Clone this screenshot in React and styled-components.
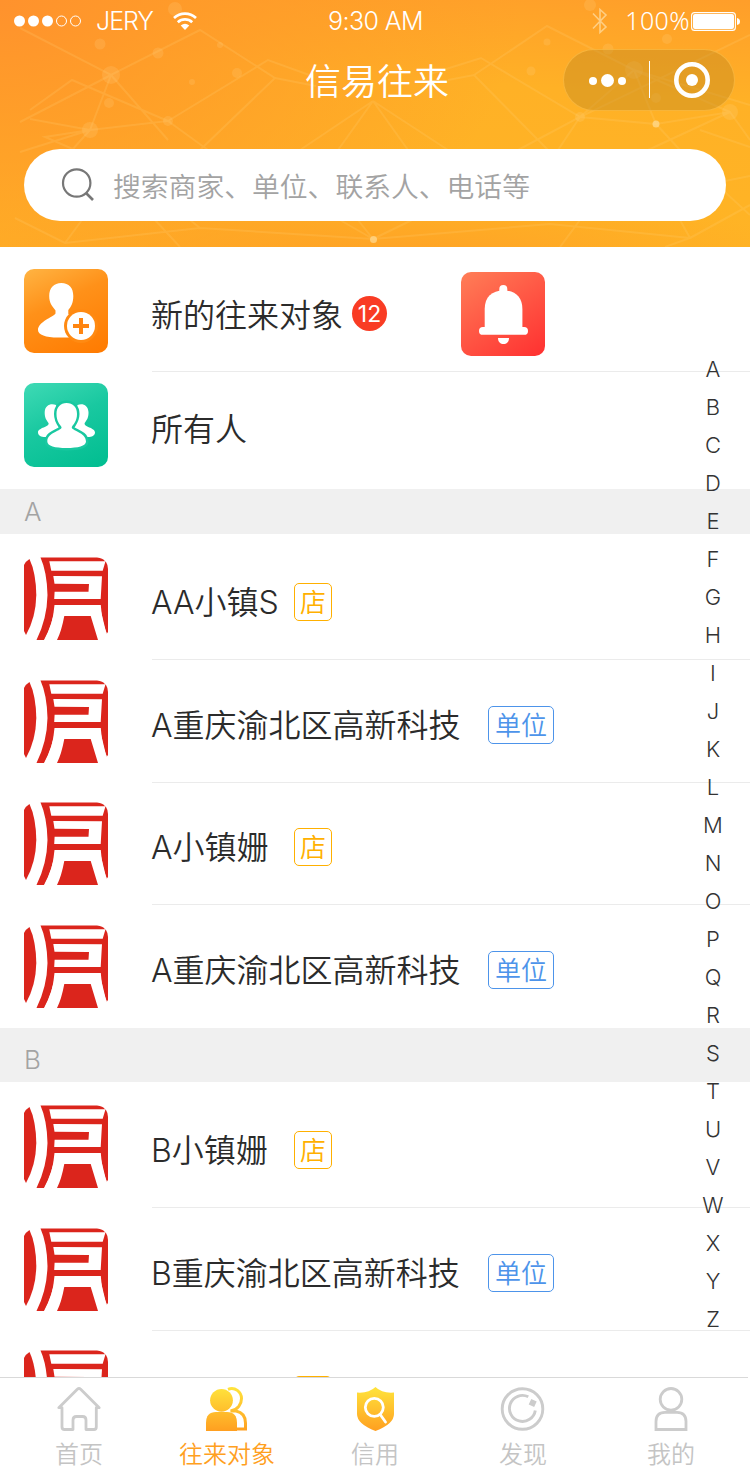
import React, { useState } from "react";
import styled, { createGlobalStyle, css } from "styled-components";

const GlobalStyle = createGlobalStyle`
  * { box-sizing: border-box; }
  body {
    margin: 0;
    background: #fff;
    font-family: Inter, "Noto Sans CJK SC", sans-serif;
    font-weight: 350;
    color: #333;
  }
`;

const Page = styled.div`
  position: relative;
  display: flex;
  flex-direction: column;
  width: 750px;
  height: 1475px;
  overflow: hidden;
  background: #fff;
`;

const Header = styled.header`
  position: relative;
  flex: none;
  height: 247px;
  color: #fff;
  background:
    radial-gradient(ellipse 420px 75px at 50% 105%, rgba(255, 158, 38, 0.85), rgba(255, 165, 38, 0) 100%),
    radial-gradient(ellipse 520px 340px at 0 0, #ff922d 0%, rgba(255, 150, 42, 0.7) 35%, rgba(255, 180, 36, 0) 100%),
    linear-gradient(184deg, #ff9e2a 0%, #ffb126 34%, #ffb524 100%);
`;

const Network = styled.svg`
  position: absolute;
  top: 0;
  left: 0;
`;

const StatusBar = styled.div`
  position: relative;
  display: grid;
  grid-template-columns: 1fr auto 1fr;
  align-items: center;
  height: 42px;
  padding: 0 10px 0 14px;
  font-size: 25px;
  font-weight: 300;
`;

const StatusSide = styled.div`
  display: flex;
  align-items: center;
  justify-content: ${(props) => (props.$right ? "flex-end" : "flex-start")};
`;

const Carrier = styled.span`
  margin: 0 20px 0 14px;
  letter-spacing: -1px;
`;

const Clock = styled.span`
  margin-right: 3px;
  letter-spacing: -0.6px;
`;

const Percent = styled.span`
  margin: -2px 1px 0 17px;
  font-family: "Noto Sans", sans-serif;
  letter-spacing: 0.4px;
`;

const NavBar = styled.div`
  position: relative;
  display: grid;
  grid-template-columns: 1fr auto 1fr;
  align-items: center;
  height: 76px;
  padding: 0 15px;
`;

const Title = styled.h1`
  grid-column: 2;
  margin: 4px 0 0 4px;
  font-size: 36px;
  line-height: 52px;
  font-weight: 350;
`;

const Capsule = styled.div`
  justify-self: end;
  display: flex;
  align-items: center;
  width: 172px;
  height: 62px;
  border: 1px solid rgba(255, 190, 70, 0.7);
  border-radius: 31px;
  background: rgba(190, 135, 32, 0.42);
`;

const SearchBox = styled.div`
  position: relative;
  display: flex;
  align-items: center;
  height: 72px;
  margin: 31px 24px 0;
  padding-left: 37px;
  border-radius: 36px;
  background: #fff;
`;

const SearchInput = styled.input`
  flex: 1;
  margin-left: 17px;
  padding: 3px 0 0;
  border: 0;
  outline: 0;
  background: none;
  font: 350 27.8px Inter, "Noto Sans CJK SC", sans-serif;
  &::placeholder {
    color: #a3a3a3;
    opacity: 1;
  }
`;

const List = styled.main`
  flex: 1;
  min-height: 0;
  overflow: hidden;
`;

const Row = styled.div`
  display: flex;
  height: ${(props) => props.$height}px;
  padding: ${(props) => props.$top}px 0 0 24px;
`;

const Body = styled.div`
  display: flex;
  align-items: center;
  align-self: stretch;
  flex: 1;
  margin: -${(props) => props.$top}px 0 0 44px;
  padding-top: ${(props) => props.$shift}px;
  ${(props) =>
    props.$line &&
    css`
      border-bottom: 1px solid #ebebeb;
    `}
`;

const Name = styled.span`
  min-width: ${(props) => props.$width || 0}px;
  margin: ${(props) => props.$lift || 2}px 0 0 -1px;
  font-size: 32px;
  line-height: 46px;
  white-space: nowrap;
  color: #2b2b2b;
`;

const Tag = styled.span`
  width: ${(props) => (props.$unit ? 66 : 38)}px;
  height: 38px;
  border: 1px solid;
  border-radius: 5px;
  font-size: 26px;
  line-height: 37px;
  text-align: center;
  color: ${(props) => (props.$unit ? "#4d94ea" : "#ffb000")};
`;

const Badge = styled.span`
  width: 35px;
  height: 35px;
  margin: -3px 74px 0 9px;
  border-radius: 50%;
  background: #f93c24;
  color: #fff;
  font-size: 23px;
  font-weight: 400;
  line-height: 36px;
  text-align: center;
`;

const Tile = styled.div`
  flex: none;
  width: 84px;
  height: 84px;
  margin-top: ${(props) => props.$lift || 0}px;
  border-radius: 10px;
  background: ${(props) => props.$fill};
  svg { display: block; }
`;

const SectionTitle = styled.div`
  height: ${(props) => props.$height}px;
  padding: ${(props) => props.$top}px 0 0 24px;
  background: #f0f0f0;
  color: #a3a3a3;
  font-size: 26px;
  line-height: 45px;
`;

const LetterIndex = styled.nav`
  position: absolute;
  top: 350px;
  right: 17px;
  display: flex;
  flex-direction: column;
  width: 40px;
  text-align: center;
  font-size: 22px;
  font-weight: 300;
  line-height: 38px;
`;

const TabBar = styled.footer`
  flex: none;
  display: grid;
  grid-template-columns: repeat(5, 148px);
  width: 748px;
  height: 98px;
  padding: 9px 0 0 5px;
  border-top: 1px solid #d9d9d9;
  background: #fff;
`;

const Tab = styled.div`
  display: flex;
  flex-direction: column;
  align-items: center;
  font-size: 24px;
  line-height: 36px;
  color: ${(props) => (props.$active ? "#ffa01e" : "#c4c4c4")};
  cursor: pointer;
  svg { margin-bottom: 6px; overflow: visible; }
`;

const NetworkLines = () => (
  <Network width="750" height="247" viewBox="0 0 750 247">
    <g fill="none" stroke="#ffd27a" strokeOpacity="0.2" strokeWidth="2">
      <path d="M20 28L111 75L200 30L275 78L316 86M168 121L268 60L312 76M275 78L200 150M111 75L90 130L72 150M111 75L168 140M30 110L72 80L168 121L90 130L30 119M111 75L20 122M168 121L208 150M90 130L45 137L75 150M90 130L20 152" />
      <path d="M373 101L300 150M373 101L338 150M373 101L408 150M373 101L448 150M430 74L481 58L580 117L518 150M448 80L474 75L548 150M474 75L547 26L634 70L730 112M580 117L634 70L656 124L580 117L750 35M656 124L730 112L750 140M656 124L680 150M580 117L558 150M730 112L648 150M634 70L750 105M700 130L750 147" />
      <path d="M373 239L200 228L65 243L15 218M373 239L550 224L690 238M373 239L340 220M373 239L358 220M373 239L412 220M190 220L200 228M155 220L180 247M82 220L65 243M580 220L560 247M680 220L690 238L665 247M715 183L750 176M715 183L750 215M690 238L750 205" />
    </g>
    <g fill="#ffd690" fillOpacity="0.18">
      <circle cx="111" cy="75" r="9" />
      <circle cx="90" cy="130" r="8" />
      <circle cx="168" cy="121" r="5" />
      <circle cx="175" cy="9" r="7" />
      <circle cx="100" cy="44" r="5.5" />
      <circle cx="158" cy="53" r="5.5" />
      <circle cx="109" cy="103" r="5" />
      <circle cx="237" cy="73" r="5" />
      <circle cx="192" cy="82" r="3" />
      <circle cx="220" cy="45" r="3" />
      <circle cx="590" cy="5" r="6" />
      <circle cx="547" cy="42" r="3.5" />
      <circle cx="531" cy="71" r="4.5" />
      <circle cx="608" cy="49" r="5.5" />
      <circle cx="667" cy="39" r="5" />
      <circle cx="634" cy="70" r="9" />
      <circle cx="656" cy="98" r="5" />
      <circle cx="580" cy="117" r="5" />
      <circle cx="730" cy="112" r="8" />
    </g>
    <g fill="#ffe0a0" fillOpacity="0.65">
      <circle cx="656" cy="124" r="3.5" />
      <circle cx="373.5" cy="239.5" r="3.5" />
    </g>
  </Network>
);

const SignalIcon = () => (
  <svg width="68" height="12" viewBox="0 0 68 12">
    <g fill="#fff">
      <circle cx="5.5" cy="6" r="5.5" />
      <circle cx="19.5" cy="6" r="5.5" />
      <circle cx="33.5" cy="6" r="5.5" />
    </g>
    <g fill="none" stroke="#fff">
      <circle cx="47.5" cy="6" r="5" />
      <circle cx="61.5" cy="6" r="5" />
    </g>
  </svg>
);

const WifiIcon = () => (
  <svg width="24" height="18" viewBox="0 0 24 18">
    <g fill="none" stroke="#fff" strokeWidth="2.7">
      <path d="M1 6A16 16 0 0 1 23 6" />
      <path d="M4.8 10.2A10.6 10.6 0 0 1 19.2 10.2" />
    </g>
    <path d="M7.7 13.6Q12 10 16.3 13.6L12 18Z" fill="#fff" />
  </svg>
);

const BluetoothIcon = () => (
  <svg width="16" height="28" viewBox="0 0 16 28">
    <path
      d="M1 6.5L14 20L8 25.5V2.5L14 8L1 21.5"
      fill="none"
      stroke="#ffdca0"
      strokeOpacity="0.75"
      strokeWidth="1.6"
    />
  </svg>
);

const BatteryIcon = () => (
  <svg width="49" height="19" viewBox="0 0 49 19">
    <rect x="0.6" y="0.6" width="43.8" height="17.8" rx="3" fill="none" stroke="#fff" strokeWidth="1.1" />
    <rect x="2" y="2" width="41" height="15" rx="2" fill="#fff" />
    <path d="M46 6Q49 6.5 49 9.5Q49 12.5 46 13Z" fill="#fff" />
  </svg>
);

const CapsuleIcons = () => (
  <svg width="170" height="60" viewBox="0 0 170 60">
    <g fill="#fff">
      <circle cx="29" cy="31" r="4" />
      <circle cx="43.5" cy="30.5" r="6.5" />
      <circle cx="58" cy="31" r="4" />
      <rect x="85" y="11" width="1" height="37" />
      <circle cx="128" cy="30" r="6" />
    </g>
    <circle cx="128" cy="30" r="15.7" fill="none" stroke="#fff" strokeWidth="4.6" />
  </svg>
);

const SearchIcon = () => (
  <svg width="35" height="36" viewBox="0 0 35 36" fill="none" stroke="#777">
    <circle cx="15.7" cy="16" r="13.7" strokeWidth="2.2" />
    <path d="M25 26L32 33" strokeWidth="2.7" />
  </svg>
);

const AddUserIcon = () => (
  <svg width="84" height="84" viewBox="0 0 84 84">
    <path
      d="M37.3 14C45 14 49.3 19 49.3 27C49.3 34 47 38 44.3 41V45L52 49L46 68.5H37C23 69 14 66 14 61C14 53 29 48 31.5 44.5V41.5C28 37 25.2 34 25.2 27C25.2 19 30 14 37.3 14Z"
      fill="#fff"
    />
    <circle cx="57" cy="57" r="17" fill="#ff8a12" />
    <circle cx="57" cy="57" r="14" fill="#fff" />
    <path d="M57 49V65M49 57H65" stroke="#ff8510" strokeWidth="4" />
  </svg>
);

const GroupIcon = () => (
  <svg width="84" height="84" viewBox="0 0 84 84">
    <g fill="#fff">
      <path d="M32 22C27 20 21 22 20.7 29C20.5 35 22.5 37 24.5 40C26 44 14 44.5 14 49.5C14 53 18 54.3 22 54L38 46Z" />
      <path d="M53.5 22C58.5 20 64 22 64.5 29C64.7 35 62.7 37 60.7 40C59.2 44 71 44.5 71 49.5C71 53 67 54.3 63 54L47 46Z" />
      <path
        d="M42.5 20C49 20 53 24 53 31C53 38 49.5 41 47.8 44C47 48 62 49 62 58.5C62 63 54 65 42.5 65C31 65 23.3 63 23.3 58.5C23.3 49 38.5 48 37.5 44C35.5 41 32.5 38 32.5 31C32.5 24 36.5 20 42.5 20Z"
        stroke="#19c8a0"
        strokeWidth="5"
        paintOrder="stroke"
      />
    </g>
  </svg>
);

const BellIcon = () => (
  <svg width="84" height="84" viewBox="0 0 84 84" fill="#fff">
    <rect x="38.3" y="13" width="8" height="12" rx="4" />
    <path d="M23.7 56V37C23.7 25 31 18.5 42.5 18.5C54 18.5 61.4 25 61.4 37V56Z" />
    <rect x="18" y="55" width="49" height="7.8" rx="3.9" />
    <path d="M37 66H48C48 70 45.5 72 42.5 72C39.5 72 37 70 37 66Z" />
  </svg>
);

const ShopLogo = () => (
  <svg width="84" height="84" viewBox="0 0 84 84">
    <g fill="#db251c">
      <path d="M0 8Q2 4 5.5 2Q12 16 12.3 38Q12 60 2 78L0 74Z" />
      <path d="M16.5 0.5H73Q79 1 81 4.2L82 5Q84 8 84 12V75L82.5 77L76 50H31Q29 66 20 83H12.5Q23 62 23.5 38Q23 15 16.5 0.5Z" />
    </g>
    <g fill="#fff">
      <path d="M25.3 4.3L81.5 4.3L78.7 13.7L27.3 13.7Z" />
      <path d="M29.3 19L78 19.3L76.7 42H30.2L30.6 34.7H64.5L65 27L30.5 26.7Z" />
      <path d="M30.5 48H76.8Q78 66 82.7 76V84H20Q29 68 30.5 48Z" />
    </g>
    <path d="M40.3 59H66.7L74 83H33Q37.5 74 40.3 59Z" fill="#db251c" />
  </svg>
);

const HomeIcon = () => (
  <svg width="44" height="44" viewBox="0 0 44 44" fill="none" stroke="#ccc" strokeWidth="2.8" strokeLinejoin="round" strokeLinecap="round">
    <path d="M5 20.7H1.8L20.3 2.3Q22 0.8 23.7 2.3L42.2 20.7H39.3V40Q39.3 42.5 37 42.5H29V33Q29 29.5 25.5 29.5H19.5Q16 29.5 16 33V42.5H7.5Q5 42.5 5 40Z" />
  </svg>
);

const ContactsIcon = () => (
  <svg width="42" height="44" viewBox="0 0 42 44">
    <defs>
      <linearGradient id="contacts" gradientUnits="userSpaceOnUse" x1="0" y1="0" x2="0" y2="44">
        <stop offset="0" stopColor="#ffe43c" />
        <stop offset="1" stopColor="#ff9f20" />
      </linearGradient>
    </defs>
    <g fill="url(#contacts)">
      <circle cx="15.5" cy="13.3" r="11.4" />
      <path d="M0 44V36Q0 25 10 25H21Q31 25 31 36V44Z" />
    </g>
    <path
      d="M22 2.3C29 -0.5 35.5 5 35.5 11.5C35.5 17 32 22.8 24.5 24H30Q39.5 26 39.5 36V42H31"
      fill="none"
      stroke="url(#contacts)"
      strokeWidth="3"
    />
  </svg>
);

const CreditIcon = () => (
  <svg width="38" height="44" viewBox="0 0 38 44">
    <defs>
      <linearGradient id="shield" x1="0" y1="0" x2="0" y2="1">
        <stop offset="0" stopColor="#ffe43c" />
        <stop offset="1" stopColor="#ff9f20" />
      </linearGradient>
    </defs>
    <path d="M19.5 0Q26 6.5 38 5.5V27Q38 37 19.5 44Q1 37 1 27V5.5Q12.5 6.5 19.5 0Z" fill="url(#shield)" />
    <g fill="none" stroke="#fff" strokeWidth="2.8" strokeLinecap="round">
      <circle cx="18.3" cy="20.3" r="9" />
      <path d="M24.2 27.5L29.5 35" />
    </g>
  </svg>
);

const DiscoverIcon = () => (
  <svg width="44" height="44" viewBox="0 0 44 44" fill="none" stroke="#ccc" strokeWidth="2.9">
    <circle cx="21.5" cy="22" r="20.3" />
    <path d="M27.3 9.8A13 13 0 1 0 34.3 23.5" />
    <rect x="28.7" y="13" width="6" height="6" transform="rotate(25 31.7 16)" fill="#ccc" stroke="none" />
  </svg>
);

const MineIcon = () => (
  <svg width="34" height="44" viewBox="0 0 34 44" fill="none" stroke="#ccc" strokeWidth="2.8">
    <circle cx="17" cy="12.3" r="10.8" />
    <path d="M2 42.5V34.5Q2 25.3 11 25.3H23Q32 25.3 32 34.5V42.5Z" />
  </svg>
);

const groups = [
  {
    letter: "A",
    height: 45,
    top: 0,
    rows: [
      { name: "AA小镇S", height: 126, top: 23 },
      { name: "A重庆渝北区高新科技", unit: true, height: 123, top: 20 },
      { name: "A小镇姗", height: 122, top: 19 },
      { name: "A重庆渝北区高新科技", unit: true, height: 123, top: 20, last: true },
    ],
  },
  {
    letter: "B",
    height: 54,
    top: 9,
    rows: [
      { name: "B小镇姗", height: 126, top: 23 },
      { name: "B重庆渝北区高新科技", unit: true, height: 123, top: 20 },
      { name: "", height: 122, top: 19 },
    ],
  },
];

const tabs = [
  { label: "首页", icon: HomeIcon },
  { label: "往来对象", icon: ContactsIcon },
  { label: "信用", icon: CreditIcon },
  { label: "发现", icon: DiscoverIcon },
  { label: "我的", icon: MineIcon },
];

const ContactRow = ({ row }) => {
  // the name sits three pixels under the middle of the logo
  const shift = (row.top + 45) * 2 - row.height + (row.last ? 0 : 1);
  return (
    <Row $height={row.height} $top={row.top}>
      <Tile $fill="none">
        <ShopLogo />
      </Tile>
      <Body $top={row.top} $shift={Math.max(shift, 0)} $line={!row.last}>
        <Name $width={row.unit ? 337 : 143}>{row.name}</Name>
        <Tag $unit={row.unit}>{row.name && (row.unit ? "单位" : "店")}</Tag>
      </Body>
    </Row>
  );
};

const App = () => {
  const [active, setActive] = useState(1);
  const [search, setSearch] = useState("");

  return (
    <Page>
      <GlobalStyle />
      <Header>
        <NetworkLines />
        <StatusBar>
          <StatusSide>
            <SignalIcon />
            <Carrier>JERY</Carrier>
            <WifiIcon />
          </StatusSide>
          <Clock>9:30 AM</Clock>
          <StatusSide $right>
            <BluetoothIcon />
            <Percent>100%</Percent>
            <BatteryIcon />
          </StatusSide>
        </StatusBar>
        <NavBar>
          <Title>信易往来</Title>
          <Capsule>
            <CapsuleIcons />
          </Capsule>
        </NavBar>
        <SearchBox>
          <SearchIcon />
          <SearchInput
            value={search}
            placeholder="搜索商家、单位、联系人、电话等"
            onChange={(e) => setSearch(e.target.value)}
          />
        </SearchBox>
      </Header>

      <List>
        <Row $height={125} $top={22}>
          <Tile $fill="linear-gradient(155deg, #ffb443 0%, #ff9119 40%, #ff7a00 100%)">
            <AddUserIcon />
          </Tile>
          <Body $top={22} $shift={11} $line>
            <Name>新的往来对象</Name>
            <Badge>12</Badge>
            <Tile
              $lift={-2}
              $fill="linear-gradient(145deg, #ff7e57 0%, #ff5a46 45%, #ff3030 100%)"
            >
              <BellIcon />
            </Tile>
          </Body>
        </Row>
        <Row $height={117} $top={11}>
          <Tile $fill="linear-gradient(155deg, #3fdab5 0%, #19c8a0 45%, #00bd90 100%)">
            <GroupIcon />
          </Tile>
          <Body $top={11} $shift={0}>
            <Name $lift={-2}>所有人</Name>
          </Body>
        </Row>
        {groups.map((group) => (
          <React.Fragment key={group.letter}>
            <SectionTitle $height={group.height} $top={group.top}>
              {group.letter}
            </SectionTitle>
            {group.rows.map((row, i) => (
              <ContactRow key={i} row={row} />
            ))}
          </React.Fragment>
        ))}
      </List>

      <LetterIndex>
        {"ABCDEFGHIJKLMNOPQRSTUVWXYZ".split("").map((letter) => (
          <span key={letter}>{letter}</span>
        ))}
      </LetterIndex>

      <TabBar>
        {tabs.map(({ label, icon: Icon }, i) => (
          <Tab key={label} $active={i === active} onClick={() => setActive(i)}>
            <Icon />
            {label}
          </Tab>
        ))}
      </TabBar>
    </Page>
  );
};

export default App;
